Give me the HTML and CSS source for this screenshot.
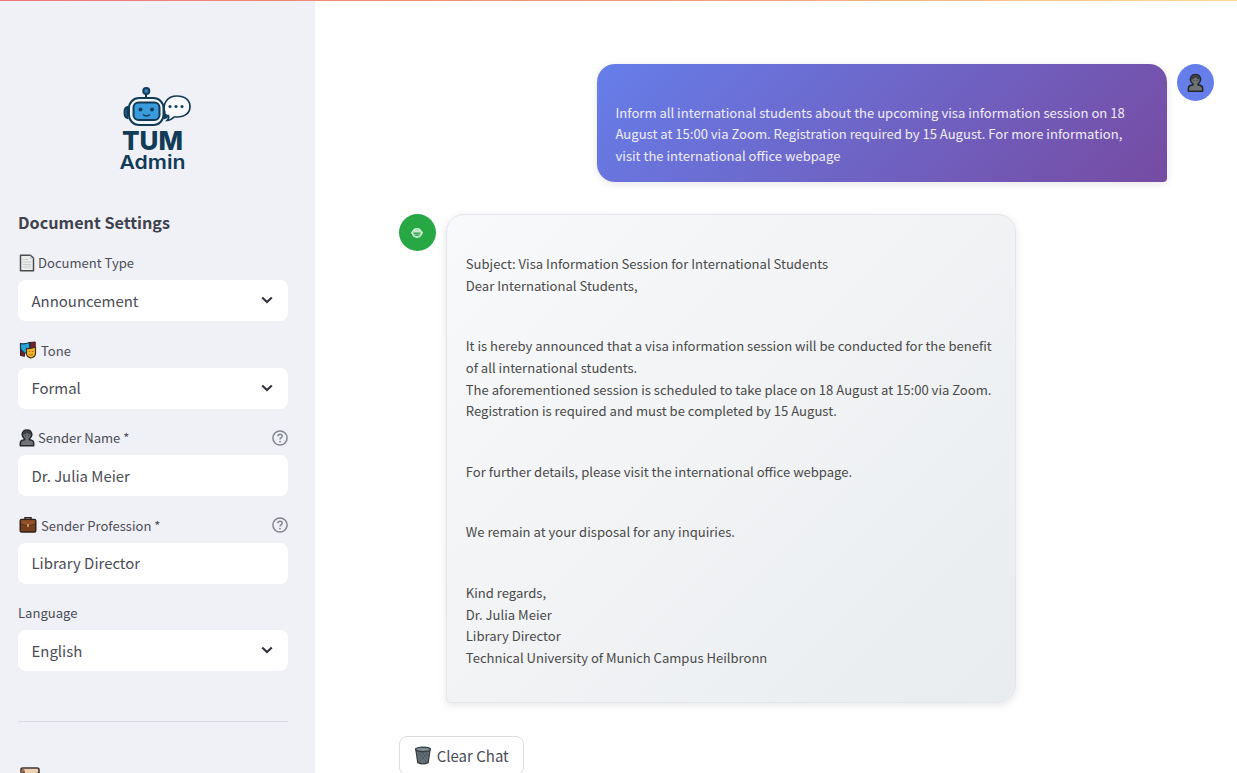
FILE: index.html
```
<!DOCTYPE html>
<html lang="en">
<head>
<meta charset="utf-8">
<title>TUM Admin</title>
<link rel="stylesheet" href="styles.css">
</head>
<body>
<svg class="defs" width="0" height="0" aria-hidden="true">
  <symbol id="chevron" viewBox="0 0 12 8"><path d="M1.200 1.400 6 6l4.800-4.600" fill="none" stroke="#31333f" stroke-width="2.100"/></symbol>
  <symbol id="help" viewBox="0 0 16 16"><circle cx="8" cy="8" r="7.100" fill="none" stroke="#84868f" stroke-width="1.500"/><path d="M5.900 6.300C5.900 3.400 10.300 3.500 10.200 6.200 10.100 7.700 8 7.700 8 9.600" fill="none" stroke="#84868f" stroke-width="1.500"/><circle cx="8" cy="11.700" r=".9" fill="#84868f"/></symbol>
  <symbol id="person" viewBox="0 0 16 18"><path d="M1.300 16.700V14c0-2 1.700-2.900 4.300-3.200V9.800C4.200 8.700 3.300 7.500 3.100 5.700 3.500 2.700 5.300 1 8 1s4.500 1.700 4.900 4.700c-.2 1.800-1.100 3-2.500 4.100v1c2.600.3 4.300 1.200 4.300 3.200v2.700z" fill="#707274" stroke="#25282d" stroke-width="1.500" stroke-linejoin="round"/><path d="M3.600 5.800C5.500 5.600 7 5 8 3.500c1 1.500 2.500 2.100 4.400 2.300C12.300 3 10.700 1.500 8 1.500S3.800 3 3.600 5.800z" fill="#3c3f43"/><path d="M6.100 6.800h.8m2.200 0h.8" stroke="#25282d"/></symbol>
</svg>
<div class="app">
  <aside class="sidebar">
    <svg class="logo" width="100" height="100" viewBox="0 0 100 100">
      <g stroke="#123b58" stroke-width="2">
        <path d="M41 20v-7" /><circle cx="41.300" cy="11" r="3" fill="#2f83bb"/>
        <path d="M22.500 27c-4 1-4 10 0 11zM60 27c4 1 4 10 0 11z" fill="#2f83bb"/>
        <rect x="24" y="18" width="34.500" height="27" rx="10" fill="#f4f7fa"/>
        <rect x="28.500" y="22.500" width="26" height="17.500" rx="5" fill="#3a9bdc"/>
        <path d="M60 33c-3-9 2-17 12-17 8 0 13 4 13 10.500S80 37 72 37h-3c-2 2-4 3.500-7 3.500 2-2 2-4 1-5.500" fill="#f7f9fc" stroke-width="1.700"/>
      </g>
      <g fill="#123b58"><circle cx="35.500" cy="29.500" r="2"/><circle cx="47" cy="29.500" r="2"/><circle cx="65" cy="26.500" r="1.500"/><circle cx="71" cy="26.500" r="1.500"/><circle cx="77" cy="26.500" r="1.500"/></g>
      <path d="M38 34.500q3.500 3 7 0" fill="none" stroke="#123b58" stroke-width="1.600"/>
      <text class="logo-top" x="17" y="69.500" textLength="61" lengthAdjust="spacingAndGlyphs">TUM</text>
      <text class="logo-bottom" x="14.500" y="88.500" textLength="66" lengthAdjust="spacingAndGlyphs">Admin</text>
    </svg>
    <h2 class="heading">Document Settings</h2>
    <div class="field">
      <div class="label"><svg class="icon" width="16" height="18" viewBox="0 0 16 18"><path d="M1.500 1.200h10L14.500 4v12.800h-13z" fill="#ececeb" stroke="#4a4c50" stroke-width="1.500" stroke-linejoin="round"/><path d="M11.300 1.500v3h3M4 5.500h5M4 8h8M4 10.500h8M4 13h8" fill="none" stroke="#c3c4c6" stroke-width=".8"/></svg><span>Document Type</span></div>
      <div class="box"><span>Announcement</span><svg width="12" height="8"><use href="#chevron"/></svg></div>
    </div>
    <div class="field">
      <div class="label wide"><svg class="icon" width="18" height="18" viewBox="0 0 18 18"><path d="M1.500 2v12.500l4 .8V8zM11 1.500l5.200-.5v12h-4z" fill="#7b2029" stroke="#3b1720"/><path d="M1.500 2.500Q5.500 3.500 10.500 1.500l.5 8-2.500 2.500H5L1.500 8z" fill="#27a5d8" stroke="#173747" stroke-width="1.200"/><path d="M7.500 7.500q4.500 .5 9-1.500v6c0 2.500-2 4.500-4.500 5-2.500-.5-4.500-2.500-4.500-4.500z" fill="#f5b52b" stroke="#473317" stroke-width="1.200"/><path d="M10 10.500h1.500m1.500 0h1.500m-4.500 3q2 1 4 0" fill="none" stroke="#a86d16"/></svg><span>Tone</span></div>
      <div class="box"><span>Formal</span><svg width="12" height="8"><use href="#chevron"/></svg></div>
    </div>
    <div class="field">
      <div class="label"><svg class="icon" width="16" height="18"><use href="#person"/></svg><span>Sender Name *</span><svg class="help" width="16" height="16"><use href="#help"/></svg></div>
      <div class="box"><span>Dr. Julia Meier</span></div>
    </div>
    <div class="field">
      <div class="label wide"><svg class="icon" width="18" height="18" viewBox="0 0 18 18"><path d="M6 4V1.800h6V4" fill="none" stroke="#33231e" stroke-width="1.500"/><rect x="1.200" y="3.500" width="15.600" height="12.500" rx="1.300" fill="#7a3e1d" stroke="#2e211d" stroke-width="1.400"/><path d="M2 8q7 3.500 14 0V4.200H2z" fill="#91502a"/><path d="M2 8q7 3.500 14 0" fill="none" stroke="#51301f"/><rect x="8" y="8.300" width="2" height="2.500" fill="#d9a05d"/></svg><span>Sender Profession *</span><svg class="help" width="16" height="16"><use href="#help"/></svg></div>
      <div class="box"><span>Library Director</span></div>
    </div>
    <div class="field">
      <div class="label"><span>Language</span></div>
      <div class="box"><span>English</span><svg width="12" height="8"><use href="#chevron"/></svg></div>
    </div>
    <hr class="rule">
    <svg class="scroll" width="20" height="20" viewBox="0 0 20 20"><path d="M1 5V2.500Q1 1 3 1h14q2 0 2 2v2q0 1.500-2 1.500V19H4V5z" fill="#ecd3b5" stroke="#41342f" stroke-width="1.600"/><path d="M1.500 5V3q0-1.500 1.500-1.500T4.500 3v2z" fill="#9c7357"/></svg>
  </aside>
  <main class="chat">
    <div class="row user">
      <div class="bubble sent"><p>Inform all international students about the upcoming visa information session on 18<br>August at 15:00 via Zoom. Registration required by 15 August. For more information,<br>visit the international office webpage</p></div>
      <div class="avatar blue"><svg width="17" height="20" viewBox="0 0 16 18"><use href="#person"/></svg></div>
    </div>
    <div class="row bot">
      <div class="avatar green"><svg width="12" height="12" viewBox="0 0 12 12"><ellipse cx="6" cy="6" rx="4.600" ry="4.400" fill="#8fd09c" stroke="#d9f3de" stroke-width="1.200"/><path d="M.3 5.800h1.200m9 0h1.200" stroke="#d9f3de" stroke-width="2"/><path d="M3 4h6" stroke="#e8f8eb" stroke-width="1.300"/><path d="M3 6.300h6M4.200 8.200h3.600" stroke="#2f9f49" stroke-width="1"/></svg></div>
      <div class="bubble received">
        <p>Subject: Visa Information Session for International Students<br>Dear International Students,</p>
        <p>It is hereby announced that a visa information session will be conducted for the benefit<br>of all international students.<br>The aforementioned session is scheduled to take place on 18 August at 15:00 via Zoom.<br>Registration is required and must be completed by 15 August.</p>
        <p>For further details, please visit the international office webpage.</p>
        <p>We remain at your disposal for any inquiries.</p>
        <p>Kind regards,<br>Dr. Julia Meier<br>Library Director<br>Technical University of Munich Campus Heilbronn</p>
      </div>
    </div>
    <button class="clear"><svg width="20" height="21" viewBox="0 0 20 21"><path d="M2 3.500 4.200 18.500Q10 21 15.800 18.500L18 3.500z" fill="#657278" stroke="#353c40" stroke-width="1.400"/><path d="M5 7l9 11M8.500 6.500l6.500 8M12 6.500l3.500 4.500M15 7 6 18M11.500 6.500 5 14.500M8 6.500 4.500 11" stroke="#48545a" stroke-width=".8"/><ellipse cx="10" cy="3.600" rx="8.300" ry="2.500" fill="#829096" stroke="#353c40" stroke-width="1.400"/></svg><span>Clear Chat</span></button>
  </main>
</div>
<div class="topline"></div>
</body>
</html>
```
FILE: styles.css
```
* { box-sizing: border-box; }
body {
  margin: 0;
  height: 773px;
  overflow: hidden;
  background: #fff;
  color: #4b4d57;
  font-family: "Noto Sans CJK SC", "Noto Sans", sans-serif;
}
.defs { position: absolute; }
.topline {
  position: absolute;
  inset: 0 0 auto;
  height: 1px;
  background: linear-gradient(90deg, #ee7777, #f3a27c 60%, #fbdc94);
}
.app { display: flex; height: 773px; overflow: hidden; }
.sidebar {
  width: 315.400px;
  flex: none;
  padding: 80px 27.400px 0 18px;
  background: #f0f1f6;
  display: flex;
  flex-direction: column;
}
.logo { margin-left: 86.500px; flex: none; }
.logo text { fill: #123b58; font-family: Inter, sans-serif; line-height: 1; }
.logo-top { font-size: 26px; font-weight: 800; }
.logo-bottom { font-size: 19px; font-weight: 600; }
.heading {
  margin: 29.400px 0 15.600px;
  height: 26px;
  font-size: 16.200px;
  line-height: 26px;
  font-weight: 700;
  white-space: nowrap;
  color: #40424d;
}
.field { height: 87.500px; flex: none; }
.label {
  display: flex;
  align-items: center;
  gap: 3px;
  height: 24px;
  font-size: 13.050px;
  white-space: nowrap;
}
.wide { gap: 4px; }
.icon { margin-left: 1px; }
.help { margin-left: auto; }
.box {
  display: flex;
  align-items: center;
  justify-content: space-between;
  height: 41px;
  margin-top: 5.400px;
  padding: 0 15.500px 1.400px 13.500px;
  border-radius: 8px;
  background: #fff;
  font-size: 14.950px;
}
.rule { width: 100%; margin: 32.600px 0 45.400px; border: 0; border-top: 1px solid #d8dae1; flex: none; }
.scroll { margin-left: 2px; flex: none; }
.chat { flex: 1; padding: 64.400px 23px 0 83.400px; }
.row { display: flex; gap: 10px; }
.user { justify-content: flex-end; }
.avatar {
  display: flex;
  align-items: center;
  justify-content: center;
  width: 37px;
  height: 37px;
  border-radius: 50%;
  flex: none;
}
.blue { background: #667eea; }
.green { background: #28a745; }
.bubble {
  width: 570.500px;
  border-radius: 18px;
  font-size: 13.070px;
  line-height: 21.700px;
  white-space: nowrap;
  box-shadow: 0 2px 8px rgba(0, 0, 0, .1);
}
.bubble p { margin: 0 0 38.900px; }
.sent {
  height: 118px;
  padding: 37.400px 19px;
  border-bottom-right-radius: 4px;
  background: linear-gradient(135deg, #667eea, #764ba2);
  color: #f0edfb;
}
.bot { margin-top: 32px; }
.received {
  height: 488.500px;
  padding: 37.500px 19px;
  border: 1px solid #e3e6ea;
  border-bottom-left-radius: 4px;
  background: linear-gradient(135deg, #f8f9fa, #e9ecef);
  color: #4a4a4a;
}
.clear {
  display: flex;
  align-items: center;
  gap: 5px;
  width: 125px;
  height: 39px;
  margin-top: 33px;
  padding: 0 14px;
  border: 1px solid #dcdde1;
  border-radius: 8px;
  background: #fff;
  color: #4b4d57;
  font: 15px "Noto Sans CJK SC", sans-serif;
  white-space: nowrap;
}
```
